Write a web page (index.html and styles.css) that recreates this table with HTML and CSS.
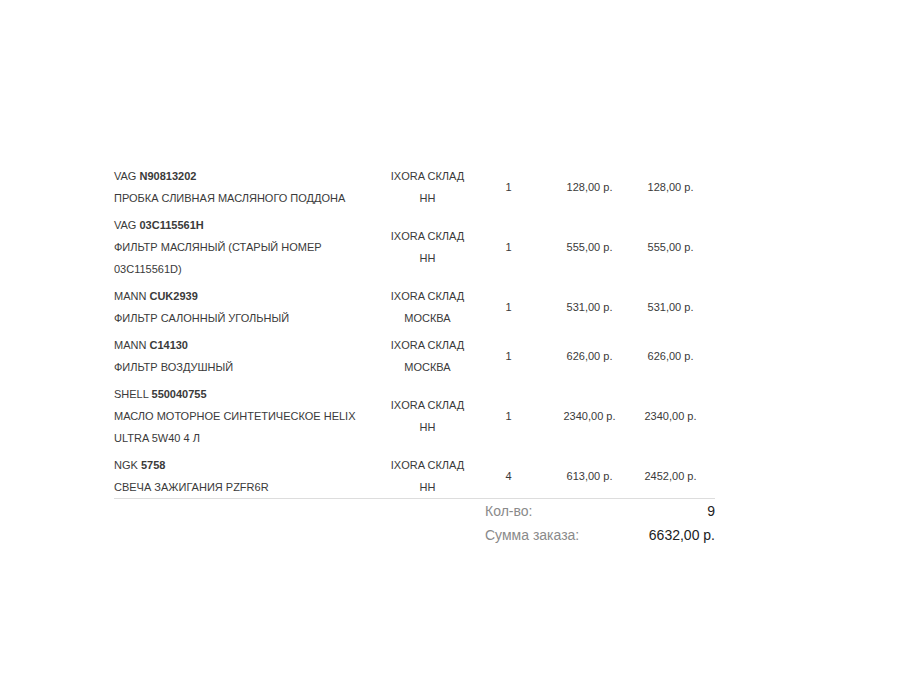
FILE: index.html
```html
<!DOCTYPE html>
<html lang="ru">
<head>
<meta charset="utf-8">
<title>Заказ</title>
<link rel="stylesheet" href="styles.css">
</head>
<body>
<div class="order">
  <table class="items">
    <colgroup>
      <col class="c-name"><col class="c-wh"><col class="c-num"><col class="c-num"><col class="c-num"><col class="c-end">
    </colgroup>
    <tbody>
      <tr>
        <td class="name">VAG <b>N90813202</b><br>ПРОБКА СЛИВНАЯ МАСЛЯНОГО ПОДДОНА</td>
        <td class="wh">IXORA СКЛАД НН</td>
        <td class="num">1</td><td class="num">128,00 р.</td><td class="num">128,00 р.</td><td></td>
      </tr>
      <tr>
        <td class="name">VAG <b>03C115561H</b><br>ФИЛЬТР МАСЛЯНЫЙ (СТАРЫЙ НОМЕР 03C115561D)</td>
        <td class="wh">IXORA СКЛАД НН</td>
        <td class="num">1</td><td class="num">555,00 р.</td><td class="num">555,00 р.</td><td></td>
      </tr>
      <tr>
        <td class="name">MANN <b>CUK2939</b><br>ФИЛЬТР САЛОННЫЙ УГОЛЬНЫЙ</td>
        <td class="wh">IXORA СКЛАД МОСКВА</td>
        <td class="num">1</td><td class="num">531,00 р.</td><td class="num">531,00 р.</td><td></td>
      </tr>
      <tr>
        <td class="name">MANN <b>C14130</b><br>ФИЛЬТР ВОЗДУШНЫЙ</td>
        <td class="wh">IXORA СКЛАД МОСКВА</td>
        <td class="num">1</td><td class="num">626,00 р.</td><td class="num">626,00 р.</td><td></td>
      </tr>
      <tr>
        <td class="name">SHELL <b>550040755</b><br>МАСЛО МОТОРНОЕ СИНТЕТИЧЕСКОЕ HELIX ULTRA 5W40 4 Л</td>
        <td class="wh">IXORA СКЛАД НН</td>
        <td class="num">1</td><td class="num">2340,00 р.</td><td class="num">2340,00 р.</td><td></td>
      </tr>
      <tr class="last">
        <td class="name">NGK <b>5758</b><br>СВЕЧА ЗАЖИГАНИЯ PZFR6R</td>
        <td class="wh">IXORA СКЛАД НН</td>
        <td class="num">4</td><td class="num">613,00 р.</td><td class="num">2452,00 р.</td><td></td>
      </tr>
    </tbody>
  </table>
  <div class="totals">
    <div class="trow"><span class="lbl">Кол-во:</span><span class="val">9</span></div>
    <div class="trow"><span class="lbl">Сумма заказа:</span><span class="val">6632,00 р.</span></div>
  </div>
</div>
</body>
</html>
```

FILE: styles.css
```css
html, body {
  margin: 0;
  padding: 0;
  background: #fff;
}
body {
  font-family: "Liberation Sans", Arial, sans-serif;
  color: #3a3a3a;
}
.order {
  width: 601px;
  padding: 160px 0 0 114px;
}
.items {
  width: 601px;
  border-collapse: collapse;
  table-layout: fixed;
  font-size: 11px;
  line-height: 22px;
}
.c-name { width: 273px; }
.c-wh { width: 81px; }
.c-num { width: 81px; }
.c-end { width: 4px; }
.items td {
  padding: 5px 0 0 0;
  vertical-align: middle;
}
.items td.name {
  padding-right: 18px;
  text-align: left;
}
.items td.name b {
  font-weight: bold;
}
.items td.wh,
.items td.num {
  text-align: center;
}
.items tr.last td {
  border-bottom: 1px solid #ddd;
}
.totals {
  margin-left: 371px;
  width: 230px;
  font-size: 14px;
  line-height: 24px;
}
.trow {
  display: flex;
  justify-content: space-between;
}
.lbl { color: #8a8a8a; }
.val { color: #222; }
```
